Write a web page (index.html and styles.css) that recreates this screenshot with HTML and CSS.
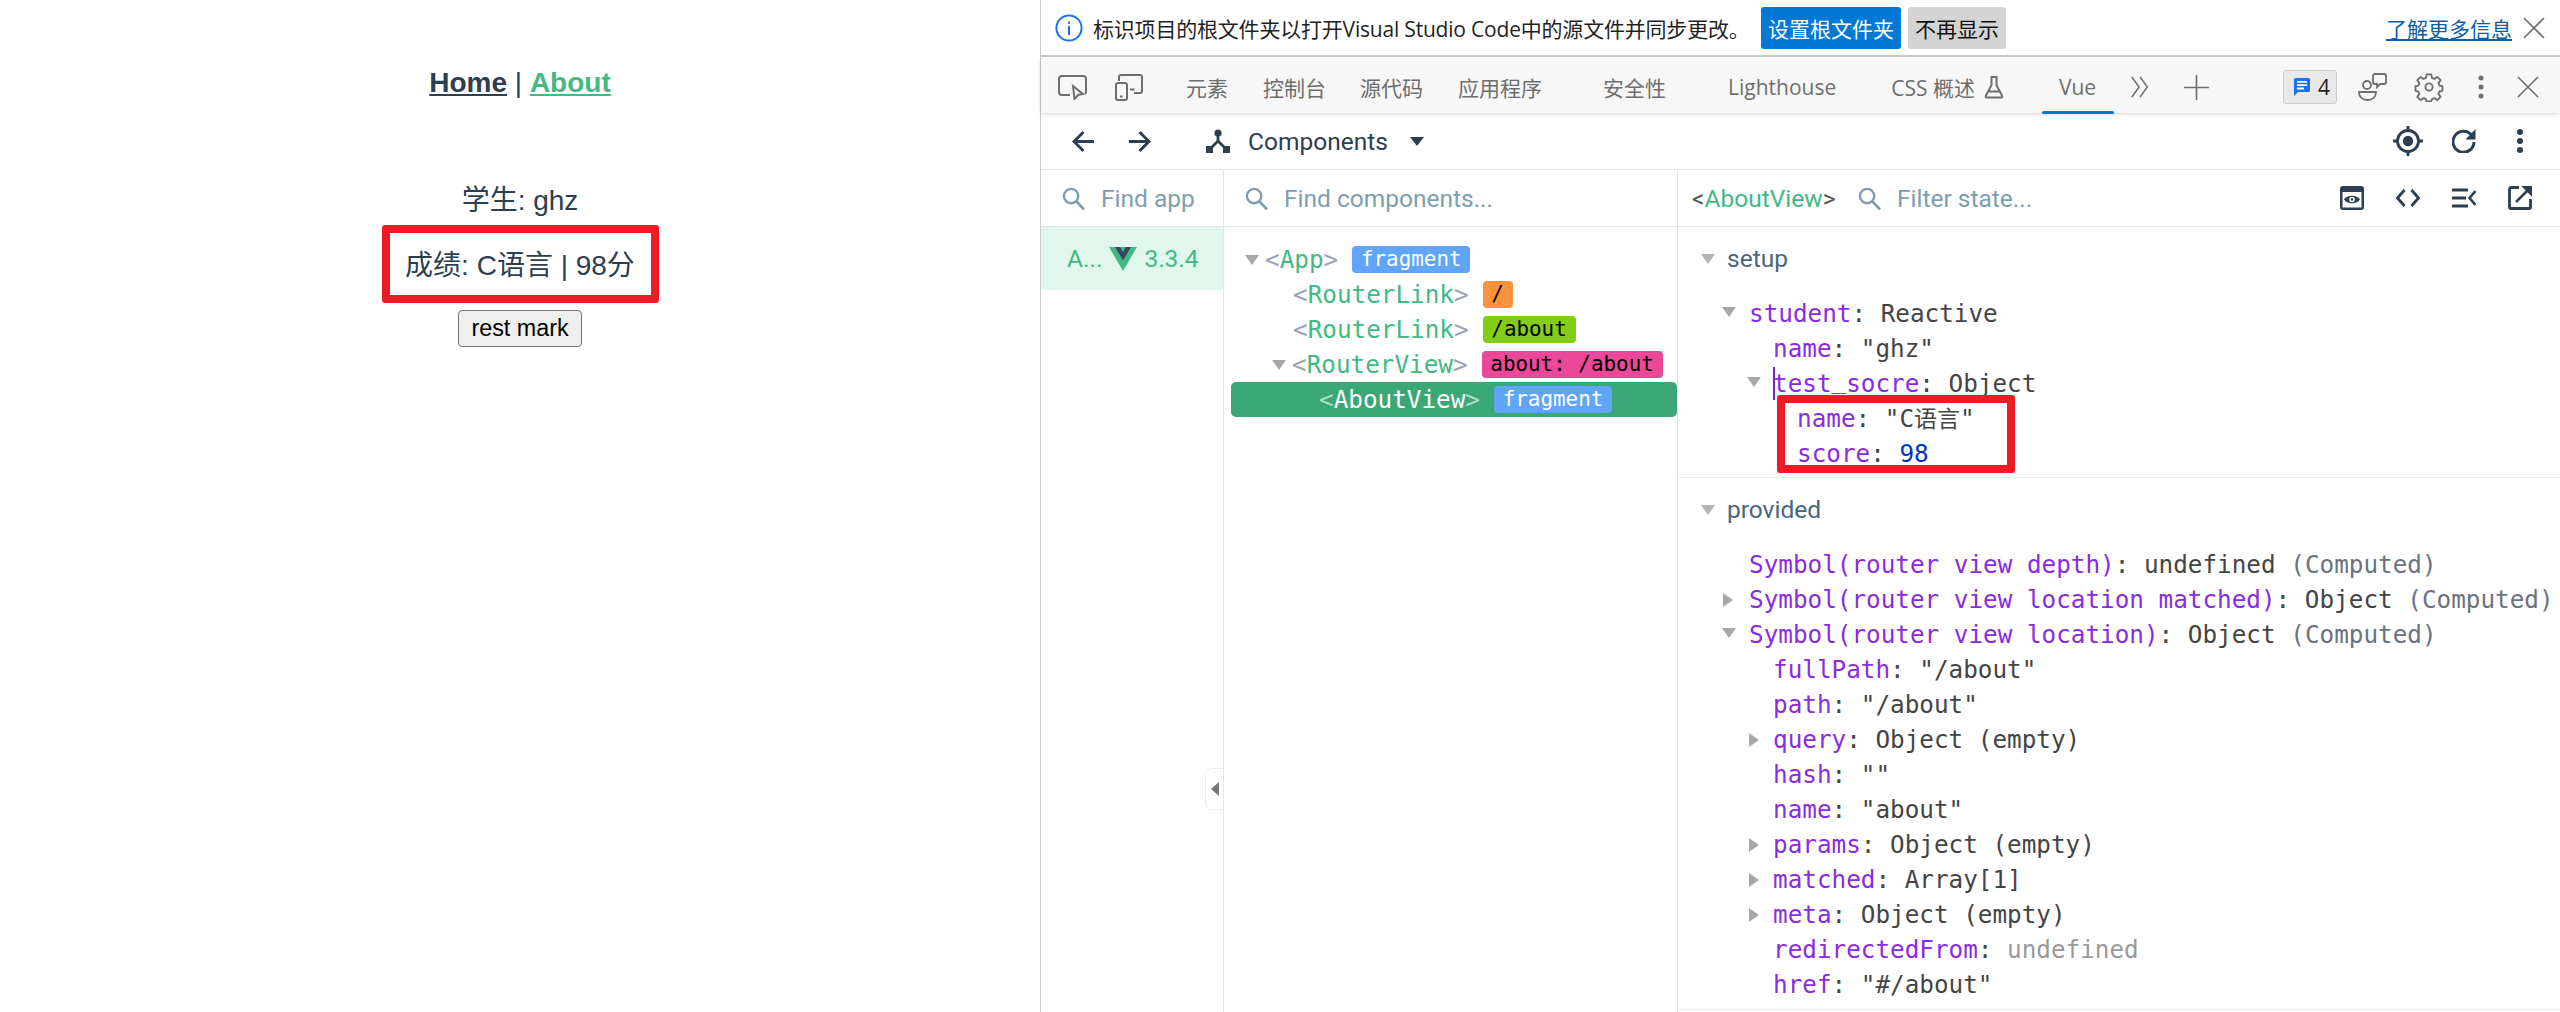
FILE: index.html
```html
<!DOCTYPE html>
<html lang="zh-CN">
<head>
    <meta charset="UTF-8">
    <title>About</title>
    <link rel="stylesheet" href="styles.css">
</head>
<body>
    <div class="page">
        <!-- the app -->
        <div class="app">
            <nav class="nav"><a class="nav-home">Home</a> | <a class="nav-about">About</a></nav>
            <p class="student">学生: ghz</p>
            <div class="mark-wrap">
                <p class="mark">成绩: C语言 | 98分</p>
                <div class="red-box red-box-app"></div>
            </div>
            <button class="rest-btn">rest mark</button>
        </div>

        <!-- devtools -->
        <div class="devtools">
            <div class="infobar">
                <svg class="info-icon" viewBox="0 0 28 28"><circle cx="14" cy="14" r="12.6" fill="none" stroke="#1a73e8" stroke-width="2"/><path d="M14 7.5v2.2M14 12v9" stroke="#1a73e8" stroke-width="2" fill="none"/></svg>
                <span class="info-text">标识项目的根文件夹以打开Visual Studio Code中的源文件并同步更改。</span>
                <button class="info-btn info-btn-primary">设置根文件夹</button>
                <button class="info-btn info-btn-plain">不再显示</button>
                <a class="info-link">了解更多信息</a>
                <svg class="close-icon" viewBox="0 0 22 22"><path d="M1 1l20 20M21 1L1 21" stroke="#6e6e6e" stroke-width="1.6" fill="none"/></svg>
            </div>

            <div class="tabbar">
                <svg class="tab-icon" viewBox="0 0 29 25"><path d="M12 20H4a3 3 0 0 1-3-3V4a3 3 0 0 1 3-3h21a3 3 0 0 1 3 3v13a3 3 0 0 1-1 2" fill="none" stroke="#6e6e6e" stroke-width="2"/><path d="M15 11l10 8-5 1-3.500 4z" fill="#f7f7f7" stroke="#6e6e6e" stroke-width="2"/></svg>
                <svg class="tab-icon tab-icon-device" viewBox="0 0 29 27"><path d="M4 7V3a2 2 0 0 1 2-2h19a2 2 0 0 1 2 2v14a2 2 0 0 1-2 2h-6" fill="none" stroke="#6e6e6e" stroke-width="2"/><rect x="1" y="9" width="11" height="17" rx="2" fill="none" stroke="#6e6e6e" stroke-width="2"/><path d="M5 21.500h2.500v2H5zM15 14.500h4.500v2H15z" fill="#6e6e6e"/></svg>
                <span class="tab tab-elements">元素</span>
                <span class="tab tab-console">控制台</span>
                <span class="tab tab-sources">源代码</span>
                <span class="tab tab-app">应用程序</span>
                <span class="tab tab-security">安全性</span>
                <span class="tab tab-light">Lighthouse</span>
                <span class="tab tab-css">CSS 概述</span>
                <svg class="flask" viewBox="0 0 20 24"><path d="M6.500 2h7M7.500 2v8L1.800 21a1 1 0 0 0 .9 1.500h14.600a1 1 0 0 0 .9-1.500L12.500 10V2M4.500 16.500h11" fill="none" stroke="#6e6e6e" stroke-width="2"/></svg>
                <span class="tab tab-vue">Vue</span>
                <svg class="more" viewBox="0 0 20 24"><path d="M1 1l8 11-8 11M10 1l8 11-8 11" fill="none" stroke="#6e6e6e" stroke-width="1.700"/></svg>
                <svg class="plus" viewBox="0 0 26 26"><path d="M13 0v26M0 13h26" stroke="#6e6e6e" stroke-width="1.700" fill="none"/></svg>
                <span class="spacer"></span>
                <div class="issues">
                    <svg class="issues-icon" viewBox="0 0 16 18"><path d="M1.500 0h13A1.500 1.500 0 0 1 16 1.500v11a1.500 1.500 0 0 1-1.500 1.500H4l-4 4V1.500A1.500 1.500 0 0 1 1.500 0z" fill="#1a73e8"/><path d="M3 3h10v1.800H3zM3 6.300h10v1.800H3zM3 9.600h7v1.800H3z" fill="#fff"/></svg>
                    <span>4</span>
                </div>
                <svg class="feedback-icon" viewBox="0 0 29 28"><circle cx="9" cy="12" r="4" fill="none" stroke="#6e6e6e" stroke-width="1.800"/><path d="M1 19h17c0 5-3.500 8-8.500 8S1 24 1 19z" fill="none" stroke="#6e6e6e" stroke-width="1.800"/><path d="M17 1h9a2 2 0 0 1 2 2v6a2 2 0 0 1-2 2h-4l-3 3v-3h-2a2 2 0 0 1-2-2V3a2 2 0 0 1 2-2z" fill="none" stroke="#6e6e6e" stroke-width="1.800"/></svg>
                <svg class="gear" viewBox="0 0 30 30"><path d="M12.500 1.500h5l.7 3.800 2.600 1.100 3.200-2.200 3.500 3.500-2.200 3.200 1.100 2.600 3.100.7v5l-3.100.7-1.100 2.600 2.200 3.200-3.500 3.500-3.200-2.200-2.600 1.100-.7 2.500h-5l-.7-2.500-2.600-1.100-3.200 2.200-3.500-3.500 2.200-3.200-1.100-2.600-3.100-.7v-5l3.100-.7 1.100-2.600-2.200-3.200 3.500-3.500 3.200 2.200 2.600-1.100z" transform="translate(1 1) scale(.93)" fill="none" stroke="#6e6e6e" stroke-width="2" stroke-linejoin="round"/><circle cx="15" cy="15" r="3.600" fill="none" stroke="#6e6e6e" stroke-width="1.800"/></svg>
                <svg class="dots" viewBox="0 0 6 26"><circle cx="3" cy="4" r="2.500" fill="#6e6e6e"/><circle cx="3" cy="13" r="2.500" fill="#6e6e6e"/><circle cx="3" cy="22" r="2.500" fill="#6e6e6e"/></svg>
                <svg class="close-icon close-icon-tabs" viewBox="0 0 22 22"><path d="M1 1l20 20M21 1L1 21" stroke="#6e6e6e" stroke-width="1.600" fill="none"/></svg>
            </div>

            <div class="vue-header">
                <svg class="nav-arrow" viewBox="0 0 23 23"><path d="M22 11.500H3M11.500 2L2 11.500l9.500 9.500" fill="none" stroke="#2c3e50" stroke-width="3"/></svg>
                <svg class="nav-arrow nav-arrow-fwd" viewBox="0 0 23 23"><path d="M1 11.500h19M11.500 2l9.500 9.500-9.500 9.500" fill="none" stroke="#2c3e50" stroke-width="3"/></svg>
                <svg class="comp-icon" viewBox="0 0 24 24"><circle cx="12" cy="4" r="3.600" fill="#2c3e50"/><path d="M12 6v6l-8 8M12 12l8 8" fill="none" stroke="#2c3e50" stroke-width="2.800"/><path d="M0 17h7v7H0zM17 17h7v7h-7z" fill="#2c3e50"/></svg>
                <span class="comp-label">Components</span>
                <span class="caret"></span>
                <span class="spacer"></span>
                <svg class="target" viewBox="0 0 30 30"><circle cx="15" cy="15" r="10.500" fill="none" stroke="#2c3e50" stroke-width="2.800"/><circle cx="15" cy="15" r="5.200" fill="#2c3e50"/><path d="M15 0v4M15 26v4M0 15h4M26 15h4" stroke="#2c3e50" stroke-width="2.800"/></svg>
                <svg class="refresh" viewBox="0 0 24 24"><path d="M19.500 6A10.500 10.500 0 1 0 22 13" fill="none" stroke="#2c3e50" stroke-width="3"/><path d="M13.500 10.500h10V0z" fill="#2c3e50"/></svg>
                <svg class="dots dots-vue" viewBox="0 0 6 26"><circle cx="3" cy="4" r="3" fill="#2c3e50"/><circle cx="3" cy="13" r="3" fill="#2c3e50"/><circle cx="3" cy="22" r="3" fill="#2c3e50"/></svg>
            </div>

            <div class="panes">
                <!-- apps -->
                <div class="pane pane-apps">
                    <div class="search">
                        <svg class="search-icon" viewBox="0 0 24 24"><circle cx="9.500" cy="9.500" r="7.500" fill="none" stroke="#7d9eae" stroke-width="2.500"/><path d="M15 15l8 8.500" stroke="#7d9eae" stroke-width="2.800"/></svg>
                        <span class="search-text search-text-clip">Find app</span>
                    </div>
                    <div class="app-row">
                        <span class="app-name">A...</span>
                        <svg class="vue-logo" viewBox="0 0 28 24"><path d="M0 0h28L14 24z" fill="#42b883"/><path d="M6 0h5l3 5 3-5h5l-8 13.500z" fill="#35495e"/></svg>
                        <span class="app-version">3.3.4</span>
                    </div>
                    <div class="collapse-handle"><span class="arrow-left"></span></div>
                </div>

                <!-- component tree -->
                <div class="pane pane-tree">
                    <div class="search">
                        <svg class="search-icon" viewBox="0 0 24 24"><circle cx="9.500" cy="9.500" r="7.500" fill="none" stroke="#7d9eae" stroke-width="2.500"/><path d="M15 15l8 8.500" stroke="#7d9eae" stroke-width="2.800"/></svg>
                        <span class="search-text">Find components...</span>
                    </div>
                    <div class="tree">
                        <div class="tree-row tree-row-0"><span class="arrow-down"></span><span class="tag">&lt;<b>App</b>&gt;</span><span class="badge badge-blue">fragment</span></div>
                        <div class="tree-row tree-row-1"><span class="tag">&lt;<b>RouterLink</b>&gt;</span><span class="badge badge-orange">/</span></div>
                        <div class="tree-row tree-row-1"><span class="tag">&lt;<b>RouterLink</b>&gt;</span><span class="badge badge-lime">/about</span></div>
                        <div class="tree-row tree-row-1 has-arrow"><span class="arrow-down"></span><span class="tag">&lt;<b>RouterView</b>&gt;</span><span class="badge badge-pink">about: /about</span></div>
                        <div class="tree-row tree-row-2 selected"><span class="tag">&lt;<b>AboutView</b>&gt;</span><span class="badge badge-blue">fragment</span></div>
                    </div>
                </div>

                <!-- state -->
                <div class="pane pane-state">
                    <div class="search search-state">
                        <span class="state-title">&lt;<b>AboutView</b>&gt;</span>
                        <svg class="search-icon" viewBox="0 0 24 24"><circle cx="9.500" cy="9.500" r="7.500" fill="none" stroke="#7d9eae" stroke-width="2.500"/><path d="M15 15l8 8.500" stroke="#7d9eae" stroke-width="2.800"/></svg>
                        <span class="search-text">Filter state...</span>
                        <span class="spacer"></span>
                        <svg class="state-icon" viewBox="0 0 24 24"><rect width="24" height="24" rx="3" fill="#2c3e50"/><path d="M2.500 6h19v15.500h-19z" fill="#fff"/><path d="M4 13.500C7 8.500 17 8.500 20 13.500 17 18.500 7 18.500 4 13.500z" fill="#2c3e50"/><circle cx="12" cy="13.500" r="2.800" fill="#fff"/><circle cx="12" cy="13.500" r="1.300" fill="#2c3e50"/></svg>
                        <svg class="state-icon" viewBox="0 0 24 24"><path d="M8.500 4L1.500 12l7 8M15.500 4l7 8-7 8" fill="none" stroke="#2c3e50" stroke-width="2.800"/></svg>
                        <svg class="state-icon" viewBox="0 0 24 24"><path d="M0 4h16M0 12h14M0 20h16" stroke="#2c3e50" stroke-width="3" fill="none"/><path d="M23.500 5l-6 7 6 7" stroke="#2c3e50" stroke-width="2.600" fill="none"/></svg>
                        <svg class="state-icon" viewBox="0 0 24 24"><path d="M11 1.500H3A1.500 1.500 0 0 0 1.500 3v18A1.500 1.500 0 0 0 3 22.500h18a1.500 1.500 0 0 0 1.500-1.500v-8" fill="none" stroke="#2c3e50" stroke-width="2.800"/><path d="M15 0h9v9zM21 3L8 16" fill="#2c3e50" stroke="#2c3e50" stroke-width="2.500"/></svg>
                    </div>

                    <div class="section section-setup">
                        <div class="section-title"><span class="arrow-down arrow-light"></span>setup</div>
                        <div class="rows">
                            <div class="row lvl-0"><span class="arrow-down"></span><i>student</i>: Reactive</div>
                            <div class="row lvl-1"><i>name</i>: "ghz"</div>
                            <div class="row lvl-1 editing"><span class="arrow-down"></span><i>test<b class="under">_</b>socre</i>: Object</div>
                            <div class="row lvl-2"><i>name</i>: "C<span class="cjk">语言</span>"</div>
                            <div class="row lvl-2"><i>score</i>: <em class="num">98</em></div>
                        </div>
                        <div class="red-box red-box-state"></div>
                    </div>

                    <div class="section section-provided">
                        <div class="section-title"><span class="arrow-down arrow-light"></span>provided</div>
                        <div class="rows">
                            <div class="row lvl-0"><i>Symbol(router view depth)</i>: undefined <s>(Computed)</s></div>
                            <div class="row lvl-0"><span class="arrow-right"></span><i>Symbol(router view location matched)</i>: Object <s>(Computed)</s></div>
                            <div class="row lvl-0"><span class="arrow-down"></span><i>Symbol(router view location)</i>: Object <s>(Computed)</s></div>
                            <div class="row lvl-1"><i>fullPath</i>: "/about"</div>
                            <div class="row lvl-1"><i>path</i>: "/about"</div>
                            <div class="row lvl-1"><span class="arrow-right"></span><i>query</i>: Object (empty)</div>
                            <div class="row lvl-1"><i>hash</i>: ""</div>
                            <div class="row lvl-1"><i>name</i>: "about"</div>
                            <div class="row lvl-1"><span class="arrow-right"></span><i>params</i>: Object (empty)</div>
                            <div class="row lvl-1"><span class="arrow-right"></span><i>matched</i>: Array[1]</div>
                            <div class="row lvl-1"><span class="arrow-right"></span><i>meta</i>: Object (empty)</div>
                            <div class="row lvl-1"><i>redirectedFrom</i>: <u>undefined</u></div>
                            <div class="row lvl-1"><i>href</i>: "#/about"</div>
                        </div>
                    </div>
                </div>
            </div>
        </div>
    </div>
</body>
</html>
```

FILE: styles.css
```css
* {
    box-sizing: border-box;
}

html, body {
    margin: 0;
    height: 100%;
    background: #fff;
    overflow: hidden;
}

svg {
    display: block;
    flex: none;
}

.spacer {
    flex: 1;
}

.page {
    display: flex;
    height: 1012px;
    font-family: "Liberation Sans", "Noto Sans CJK SC", sans-serif;
}

/* the app */
.app {
    width: 1040px;
    padding-top: 67px;
    text-align: center;
    font-size: 28px;
    color: #2c3e50;
    line-height: 32px;
}

.nav {
    height: 32px;
}

.nav a {
    font-weight: bold;
    text-decoration: underline;
}

.nav-about {
    color: #42b983;
}

.student {
    margin: 86px 0 0;
}

.mark-wrap {
    position: relative;
    margin-top: 33px;
}

.mark {
    margin: 0;
}

.rest-btn {
    display: block;
    width: 124px;
    height: 37px;
    margin: 28px auto 0;
    padding: 0;
    font: 23.33px "Liberation Sans", sans-serif;
    color: #000;
    background: #efefef;
    border: 1.500px solid #767676;
    border-radius: 4px;
}

.red-box {
    position: absolute;
    border: 8px solid #ed1c24;
    border-radius: 3px;
    background: transparent;
}

.red-box-app {
    left: 382px;
    top: -25px;
    width: 277px;
    height: 78px;
}

/* devtools */
.devtools {
    flex: 1;
    min-width: 0;
    border-left: 1px solid #ccc;
    display: flex;
    flex-direction: column;
    font-family: Roboto, "Noto Sans CJK SC", sans-serif;
}

.infobar {
    height: 57px;
    flex: none;
    display: flex;
    align-items: center;
    padding-left: 14px;
    border-bottom: 2px solid #cdcdd4;
    font-size: 21px;
    color: #1f1f1f;
    font-family: "Open Sans", "Noto Sans CJK SC", sans-serif;
}

.info-icon {
    width: 28px;
    height: 28px;
}

.info-text {
    margin-left: 10px;
    width: 668px;
    white-space: nowrap;
    letter-spacing: -0.2px;
}

.info-btn {
    height: 42px;
    padding: 0;
    border: 0;
    border-radius: 3px;
    font: inherit;
}

.info-btn-primary {
    width: 140px;
    background: #0078d4;
    color: #fff;
}

.info-btn-plain {
    width: 98px;
    margin-left: 7px;
    background: #d4d4d4;
    color: #111;
}

.info-link {
    margin-left: 380px;
    width: 126px;
    color: #0f5ea8;
    text-decoration: underline;
    white-space: nowrap;
}

.close-icon {
    width: 22px;
    height: 22px;
    margin-left: 11px;
}

.tabbar {
    height: 56px;
    flex: none;
    display: flex;
    align-items: center;
    position: relative;
    padding-top: 4px;
    padding-left: 17px;
    padding-right: 21px;
    background: #f7f7f7;
    box-shadow: 0 1px 4px rgba(0, 0, 0, .18);
    font-size: 21px;
    color: #6e6e6e;
    font-family: "Open Sans", "Noto Sans CJK SC", sans-serif;
}

.tab-icon {
    width: 29px;
    height: 25px;
}

.tab-icon-device {
    height: 27px;
    margin-left: 28px;
}

.tab {
    white-space: nowrap;
}

.tab-elements { margin-left: 42px; }
.tab-console { margin-left: 35px; }
.tab-sources { margin-left: 34px; }
.tab-app { margin-left: 35px; }
.tab-security { margin-left: 61px; }
.tab-light { margin-left: 62px; }
.tab-css { margin-left: 55px; }

.flask {
    width: 20px;
    height: 24px;
    margin-left: 9px;
}

.tab-vue {
    margin-left: 55px;
    position: relative;
}

.tab-vue::after {
    content: "";
    position: absolute;
    left: -17px;
    right: -18px;
    bottom: -13px;
    height: 3px;
    background: #0078d4;
    border-radius: 2px;
}

.more {
    width: 20px;
    height: 22px;
    margin-left: 34px;
}

.plus {
    width: 25px;
    height: 25px;
    margin-left: 34px;
}

.issues {
    width: 54px;
    height: 34px;
    display: flex;
    align-items: center;
    gap: 8px;
    padding-left: 10px;
    background: #e8e8e8;
    border: 1px solid #ccc;
    border-radius: 3px;
    color: #222;
}

.issues-icon {
    width: 16px;
    height: 18px;
}

.feedback-icon {
    width: 29px;
    height: 28px;
    margin-left: 21px;
}

.gear {
    width: 30px;
    height: 30px;
    margin-left: 27px;
}

.dots {
    width: 6px;
    height: 26px;
    margin-left: 34px;
}

.close-icon-tabs {
    margin-left: 33px;
}

.vue-header {
    height: 57px;
    flex: none;
    display: flex;
    align-items: center;
    padding-left: 31px;
    padding-right: 37px;
    border-bottom: 1.500px solid #e5e5e5;
    color: #2c3e50;
}

.nav-arrow {
    width: 23px;
    height: 23px;
}

.nav-arrow-fwd {
    margin-left: 33px;
}

.comp-icon {
    width: 24px;
    height: 24px;
    margin-left: 55px;
}

.comp-label {
    margin-left: 18px;
    font-size: 24.5px;
}

.caret {
    width: 0;
    height: 0;
    margin-left: 22px;
    border-left: 7px solid transparent;
    border-right: 7px solid transparent;
    border-top: 9px solid #2c3e50;
}

.target {
    width: 30px;
    height: 30px;
}

.refresh {
    width: 24px;
    height: 24px;
    margin-left: 29px;
}

.dots-vue {
    margin-left: 41px;
}

.panes {
    flex: 1;
    min-height: 0;
    display: flex;
}

.pane {
    position: relative;
    min-width: 0;
}

.pane-apps {
    width: 183px;
    border-right: 1.500px solid #e5e5e5;
}

.pane-tree {
    width: 454px;
    border-right: 1.500px solid #e5e5e5;
}

.pane-state {
    flex: 1;
}

.search {
    height: 57px;
    display: flex;
    align-items: center;
    gap: 16px;
    padding-left: 21px;
    border-bottom: 1.500px solid #e5e5e5;
}

.search-icon {
    width: 23px;
    height: 23px;
}

.search-text {
    font-size: 24.5px;
    color: #7d9eae;
    white-space: nowrap;
}

.search-text-clip {
    width: 96px;
    overflow: hidden;
}

.app-row {
    height: 63px;
    display: flex;
    align-items: center;
    padding-left: 26px;
    background: #e1f6ed;
    color: #42b983;
    font-size: 24.5px;
}

.vue-logo {
    width: 28px;
    height: 24px;
    margin-left: 7px;
}

.app-version {
    margin-left: 7px;
}

.collapse-handle {
    position: absolute;
    right: 0;
    top: 598px;
    width: 18px;
    height: 42px;
    display: flex;
    align-items: center;
    justify-content: center;
    background: #fff;
    border: 1px solid #eee;
    border-right: 0;
    border-radius: 7px 0 0 7px;
}

.arrow-left {
    width: 0;
    height: 0;
    border-top: 7px solid transparent;
    border-bottom: 7px solid transparent;
    border-right: 8px solid #777;
}

/* component tree */
.tree {
    padding: 15px 0 0 7px;
    font-family: "DejaVu Sans Mono", monospace;
    font-size: 24.3px;
}

.tree-row {
    height: 35px;
    display: flex;
    align-items: center;
    border-radius: 5px;
    white-space: nowrap;
}

.tree-row-0 { padding-left: 14px; }
.tree-row-1 { padding-left: 62px; }
.tree-row-2 { padding-left: 88px; }
.tree-row-1.has-arrow { padding-left: 41px; }

.tree-row .arrow-down {
    margin-right: 6px;
}

.tag {
    color: #9ca3af;
}

.tag b {
    font-weight: normal;
    color: #42b983;
}

.badge {
    height: 27px;
    margin-left: 14px;
    padding: 0 8.750px;
    border-radius: 4px;
    font-size: 20.9px;
    line-height: 27px;
    color: #000;
}

.badge-blue { background: #60a5fa; color: #fff; }
.badge-orange { background: #fb923c; }
.badge-lime { background: #84cc16; }
.badge-pink { background: #ec4899; }

.selected {
    background: #3ba776;
}

.selected .tag {
    color: rgba(255, 255, 255, .6);
}

.selected .tag b {
    color: #fff;
}

.arrow-down {
    flex: none;
    display: inline-block;
    width: 0;
    height: 0;
    border-left: 7px solid transparent;
    border-right: 7px solid transparent;
    border-top: 10px solid #a8a8a8;
}

.arrow-light {
    border-top-color: #b4b4b4;
}

.arrow-right {
    flex: none;
    display: inline-block;
    width: 0;
    height: 0;
    border-top: 7px solid transparent;
    border-bottom: 7px solid transparent;
    border-left: 10px solid #a8a8a8;
}

/* state */
.search-state {
    padding-left: 14px;
    padding-right: 28px;
}

.state-title {
    width: 150px;
    font-size: 24.5px;
    color: #555;
    white-space: nowrap;
}

.state-title b {
    font-weight: normal;
    color: #42b983;
}

.search-state .state-icon {
    width: 24px;
    height: 24px;
    margin-left: 16px;
}

.section {
    position: relative;
    padding-top: 14px;
    border-bottom: 1.500px solid #eee;
}

.section-setup {
    height: 251px;
}

.section-provided {
    height: 532px;
}

.section-title {
    display: flex;
    align-items: center;
    gap: 12px;
    height: 35px;
    padding-left: 23px;
    font-size: 24.5px;
    color: #486581;
}

.rows {
    padding-top: 20px;
    font-family: "DejaVu Sans Mono", "Noto Sans CJK SC", monospace;
    font-size: 24.3px;
    color: #444;
}

.row {
    height: 35px;
    line-height: 35px;
    position: relative;
    white-space: nowrap;
}

.lvl-0 { padding-left: 71px; }
.lvl-1 { padding-left: 95px; }
.lvl-2 { padding-left: 119px; }

.row > .arrow-down,
.row > .arrow-right {
    position: absolute;
    top: 11px;
}

.lvl-0 > .arrow-down { left: 44px; }
.lvl-0 > .arrow-right { left: 45px; }
.lvl-1 > .arrow-down { left: 69px; }
.lvl-1 > .arrow-right { left: 71px; }

/* the underscore hangs low in this font, lift it clear of the red box */
.under {
    position: relative;
    top: -4px;
    font-weight: normal;
}

.cjk {
    font-size: 23px;
}

.row i {
    font-style: normal;
    color: #8a2be2;
}

.row s {
    text-decoration: none;
    color: #6b7280;
}

.row u {
    text-decoration: none;
    color: #999;
}

.num {
    font-style: normal;
    color: #0033cc;
}

.editing::before {
    content: "";
    position: absolute;
    left: 95px;
    top: 1px;
    width: 1.500px;
    height: 33px;
    background: #7e22ce;
}

.red-box-state {
    left: 99px;
    top: 168px;
    width: 238px;
    height: 78px;
}
```
